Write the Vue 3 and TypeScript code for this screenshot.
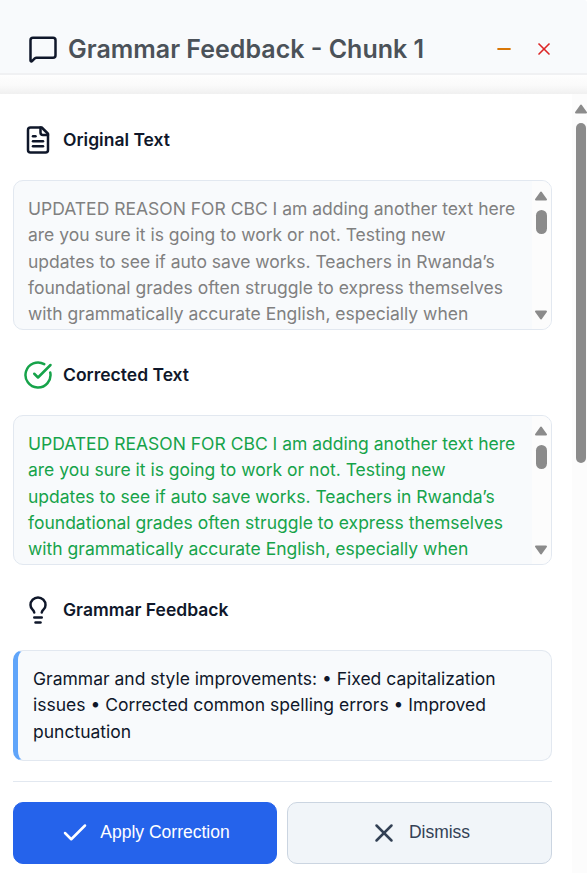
<script setup lang="ts">
interface TextSection {
  id: string
  title: string
  icon: string[]
  tone: 'muted' | 'success'
}

const icons: Record<string, string[]> = {
  message: [
    'M22 17a2 2 0 0 1-2 2H6.828a2 2 0 0 0-1.414.586l-2.202 2.202A.71.71 0 0 1 2 21.286V5a2 2 0 0 1 2-2h16a2 2 0 0 1 2 2z',
  ],
  file: [
    'M15 2H6a2 2 0 0 0-2 2v16a2 2 0 0 0 2 2h12a2 2 0 0 0 2-2V7Z',
    'M14 2v4a2 2 0 0 0 2 2h4',
    'M10 9H8',
    'M16 13H8',
    'M16 17H8',
  ],
  checkCircle: ['M21.801 10A10 10 0 1 1 17 3.335', 'm9 11 3 3L22 4'],
  bulb: [
    'M15 14c.2-1 .7-1.7 1.5-2.5 1-.9 1.5-2.2 1.5-3.5A6 6 0 0 0 6 8c0 1 .2 2.2 1.5 3.5.7.7 1.3 1.5 1.5 2.5',
    'M9 18h6',
    'M10 22h4',
  ],
  check: ['M20 6 9 17l-5-5'],
  close: ['M18 6 6 18', 'm6 6 12 12'],
  minus: ['M5 12h14'],
}

const passage = [
  'UPDATED REASON FOR CBC I am adding another text here',
  'are you sure it is going to work or not. Testing new',
  'updates to see if auto save works. Teachers in Rwanda’s',
  'foundational grades often struggle to express themselves',
  'with grammatically accurate English, especially when',
].join('\n')

const feedback = [
  'Grammar and style improvements: • Fixed capitalization',
  'issues • Corrected common spelling errors • Improved',
  'punctuation',
].join('\n')

const sections: TextSection[] = [
  { id: 'original', title: 'Original Text', icon: icons.file, tone: 'muted' },
  { id: 'corrected', title: 'Corrected Text', icon: icons.checkCircle, tone: 'success' },
]
</script>

<template>
  <div class="panel">
    <header class="header">
      <svg class="icon" viewBox="0 0 24 24"><path v-for="d in icons.message" :key="d" :d="d" /></svg>
      <h1 class="title">Grammar Feedback - Chunk 1</h1>
      <button class="tool minimize" type="button">
        <svg class="icon small" viewBox="0 0 24 24"><path v-for="d in icons.minus" :key="d" :d="d" /></svg>
      </button>
      <button class="tool close" type="button">
        <svg class="icon small" viewBox="0 0 24 24"><path v-for="d in icons.close" :key="d" :d="d" /></svg>
      </button>
    </header>
    <div class="shade"></div>

    <div class="body">
      <main class="content">
        <section v-for="s in sections" :key="s.id" class="section">
          <h2 class="heading">
            <svg class="icon" :class="s.tone" viewBox="0 0 24 24"><path v-for="d in s.icon" :key="d" :d="d" /></svg>
            <span>{{ s.title }}</span>
          </h2>
          <div class="box">
            <p class="passage" :class="s.tone">{{ passage }}</p>
            <div class="bar">
              <svg class="arrow" viewBox="0 0 14 10"><path d="M7 1.5 12 8.5H2Z" /></svg>
              <div class="thumb"></div>
              <svg class="arrow down" viewBox="0 0 14 10"><path d="M7 8.5 12 1.5H2Z" /></svg>
            </div>
          </div>
        </section>

        <section class="section">
          <h2 class="heading">
            <svg class="icon" viewBox="0 0 24 24"><path v-for="d in icons.bulb" :key="d" :d="d" /></svg>
            <span>Grammar Feedback</span>
          </h2>
          <p class="notes">{{ feedback }}</p>
        </section>

        <footer class="actions">
          <button class="action primary" type="button">
            <svg class="icon" viewBox="0 0 24 24"><path v-for="d in icons.check" :key="d" :d="d" /></svg>
            <span class="label">Apply Correction</span>
          </button>
          <button class="action secondary" type="button">
            <svg class="icon" viewBox="0 0 24 24"><path v-for="d in icons.close" :key="d" :d="d" /></svg>
            <span class="label">Dismiss</span>
          </button>
        </footer>
      </main>
      <div class="page-bar">
        <svg class="arrow" viewBox="0 0 14 10"><path d="M7 1.5 12 8.5H2Z" /></svg>
        <div class="page-thumb"></div>
      </div>
    </div>
  </div>
</template>

<style>
body {
  margin: 0;
  background: #fff;
}
</style>

<style scoped>
.panel {
  display: flex;
  flex-direction: column;
  width: 587px;
  height: 873px;
  overflow: hidden;
  font-family: Inter, sans-serif;
  font-size: 17.5px;
  line-height: 26.25px;
  color: #0f172a;
  background: #fff;
}
.panel * {
  box-sizing: border-box;
}
.icon {
  flex: none;
  display: block;
  width: 30px;
  height: 30px;
  fill: none;
  stroke: currentColor;
  stroke-width: 2;
  stroke-linecap: round;
  stroke-linejoin: round;
}
.icon.small {
  width: 20px;
  height: 20px;
}
.header {
  flex: none;
  display: flex;
  align-items: center;
  height: 75px;
  padding: 24px 23px 0 28px;
  border-bottom: 2px solid #f0f1f3;
  border-top-right-radius: 3px;
  background: #f8fafc;
}
.title {
  flex: 1;
  margin: 0 0 0 10px;
  font-size: 25px;
  font-weight: 600;
  line-height: 30px;
  color: #4b5259;
}
.tool {
  display: grid;
  place-items: center;
  width: 40px;
  height: 40px;
  padding: 0;
  border: 0;
  background: none;
}
.minimize {
  color: #d97706;
}
.minimize .icon {
  stroke-width: 2.5;
}
.close {
  color: #dc2626;
}
.shade {
  flex: none;
  height: 19px;
  background: linear-gradient(#fefefe, #fafafa 55%, #f0f0f0);
}
.body {
  flex: 1;
  display: flex;
  min-height: 0;
}
.content {
  flex: 1;
  padding: 21px 20px 0 13px;
}
.section {
  margin-bottom: 20px;
}
.heading {
  display: flex;
  align-items: center;
  gap: 10px;
  height: 50px;
  margin: 0 0 15px;
  padding-left: 10px;
  font-size: 17.5px;
  font-weight: 600;
}
.icon.success,
.passage.success {
  color: #16a34a;
}
.passage.muted {
  color: #808080;
}
.icon.muted {
  color: #0f172a;
}
.box {
  display: flex;
  height: 150px;
  overflow: hidden;
  border: 1px solid #e2e8f0;
  border-radius: 10px;
  background: #f8fafc;
}
.passage {
  flex: 1;
  margin: 0;
  padding: 15px 0 0 14px;
  white-space: pre;
}
.bar {
  flex: none;
  display: flex;
  flex-direction: column;
  align-items: center;
  width: 19px;
  padding: 10px 0 9px;
  background: #fcfcfc;
}
.arrow {
  flex: none;
  display: block;
  width: 14px;
  height: 10px;
  fill: #8b8b8b;
  stroke: #8b8b8b;
  stroke-width: 2;
  stroke-linejoin: round;
}
.bar .arrow {
  margin-right: 1px;
}
.thumb {
  width: 11px;
  height: 24px;
  margin-top: 9px;
  border-radius: 6px;
  background: #8b8b8b;
}
.bar .down {
  margin-top: auto;
}
.notes {
  height: 111px;
  margin: 0;
  padding: 15px 0 0 15px;
  border: 1px solid #e2e8f0;
  border-left: 5px solid #60a5fa;
  border-radius: 10px;
  background: #f8fafc;
  white-space: pre;
}
.actions {
  display: grid;
  grid-template-columns: 264px 265px;
  gap: 10px;
  padding-top: 20px;
  border-top: 1px solid #e2e8f0;
}
.action {
  display: flex;
  align-items: center;
  justify-content: center;
  gap: 10px;
  height: 62px;
  padding: 0;
  border: 1px solid #2563eb;
  border-radius: 10px;
  font-family: "Liberation Sans", Arial, sans-serif;
  font-size: 17.5px;
  font-weight: 500;
  line-height: 20px;
}
.label {
  padding-bottom: 2px;
}
.primary {
  color: #fff;
  background: #2563eb;
}
.secondary {
  color: #334155;
  border-color: #cbd5e1;
  background: #f1f5f9;
}
.page-bar {
  flex: none;
  display: flex;
  flex-direction: column;
  align-items: center;
  width: 15px;
  padding: 10px 0 0 3px;
  background: #fcfcfc;
}
.page-thumb {
  width: 10px;
  height: 340px;
  margin-top: 9px;
  border-radius: 5px;
  background: #8b8b8b;
}
</style>
